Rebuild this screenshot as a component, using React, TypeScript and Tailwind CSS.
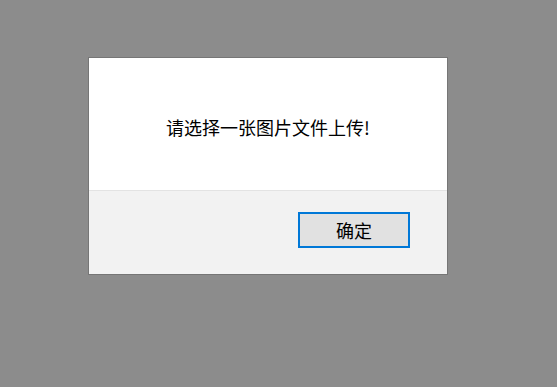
import React from "react";

const font = { fontFamily: '"Noto Sans CJK SC", "Noto Sans", sans-serif' };

export default function App() {
  return (
    <div
      className="w-[557px] h-[387px] bg-[#8c8c8c] pl-[88px] pt-[57px] overflow-hidden"
      style={font}
    >
      <div className="w-[360px] border border-[#767676] flex flex-col">
        <div className="h-[133px] bg-white border-b border-[#e3e3e3] pt-[57px] text-center">
          <p className="text-[18px] leading-[24px] text-black">请选择一张图片文件上传!</p>
        </div>
        <div className="h-[83px] bg-[#f2f2f2] flex justify-end items-start pt-[21px] pr-[37px]">
          <button className="w-[112px] h-[36px] border-2 border-[#0078d7] bg-[#e1e1e1] text-[18px] leading-none text-black">
            确定
          </button>
        </div>
      </div>
    </div>
  );
}
